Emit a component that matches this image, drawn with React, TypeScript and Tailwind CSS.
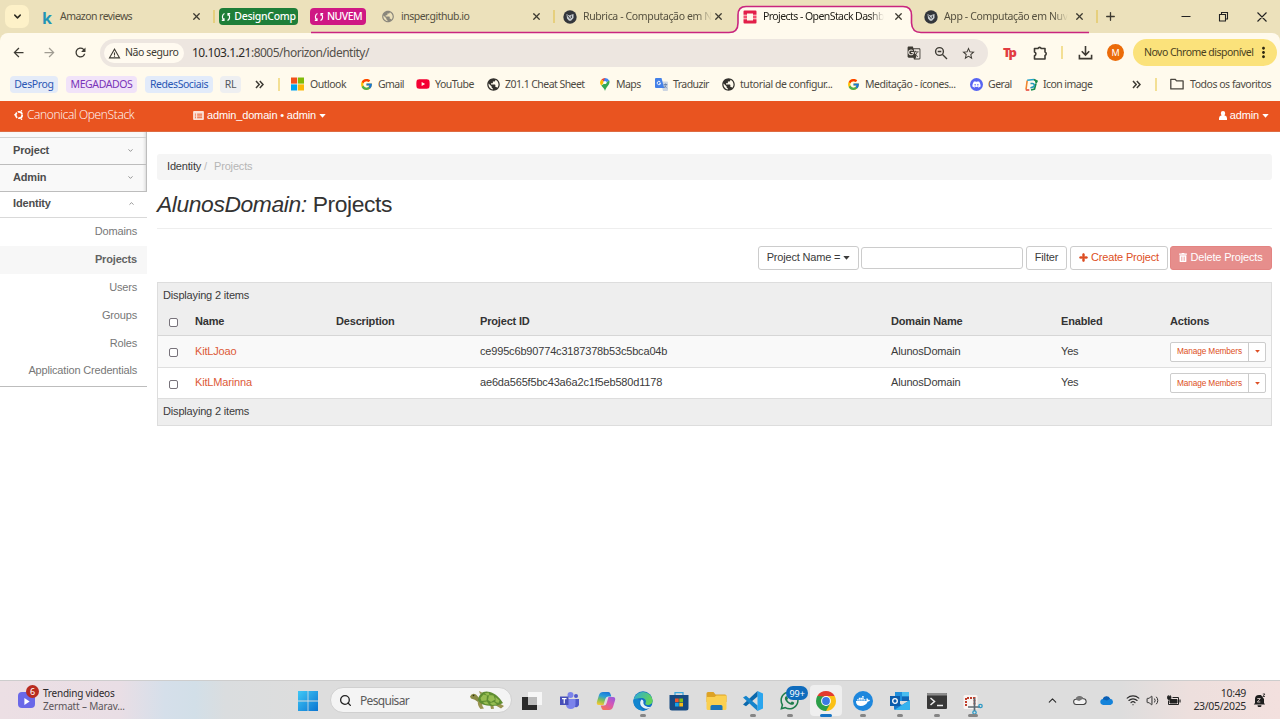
import React from "react";
import type { ReactNode } from "react";
import {
  MdArrowBack,
  MdArrowForward,
  MdRefresh,
  MdWarningAmber,
  MdGTranslate,
  MdStarBorder,
  MdMoreVert,
  MdPublic,
} from "react-icons/md";
import { FaDiscord, FaDocker, FaWhatsapp, FaYoutube, FaPlus, FaTrashAlt } from "react-icons/fa";
import { FcGoogle } from "react-icons/fc";
import { Search, X, ChevronDown, ChevronUp, Plus, Wifi, Volume2 } from "lucide-react";

const ui = "font-['Noto_Sans','Open_Sans',sans-serif]";
const arial = "font-['Liberation_Sans',Arial,sans-serif]";

function Caret({ className = "" }: { className?: string }) {
  return (
    <svg viewBox="0 0 8 5" className={className}>
      <path d="M0 0H8L4 4.6Z" fill="currentColor" />
    </svg>
  );
}

function InsperIcon() {
  return (
    <svg viewBox="0 0 14 14" className="h-[14px] w-[14px]">
      <circle cx="7" cy="7" r="6.7" fill="#33363b" />
      <path d="M3.500 4l2.500 1.500L10.500 4v4L8 10.800H6L4 8.500Z" fill="#c9ced2" />
      <path d="M4.500 5.500l3 3.600M8.300 5.500v2.500" stroke="#33363b" strokeWidth="1" />
    </svg>
  );
}

function OpenStackIcon() {
  return (
    <svg viewBox="0 0 14 14" className="h-[14px] w-[14px]">
      <path d="M1.500 0.500h11a1 1 0 0 1 1 1V4.700H10V3.600H4v1.100H.5V1.500a1 1 0 0 1 1-1Z" fill="#e21f49" />
      <path d="M.5 9.300H4v1.100h6V9.300h3.500v3.200a1 1 0 0 1-1 1h-11a1 1 0 0 1-1-1Z" fill="#e21f49" />
      <path d="M.5 5.500H4v3H.5ZM10 5.500h3.500v3H10Z" fill="#f2506e" />
    </svg>
  );
}

function SyncIcon() {
  return (
    <svg viewBox="0 0 10 10" className="h-[10px] w-[10px]" fill="none" stroke="#fff" strokeWidth="1.200">
      <path d="M3.500 1.500C1.300 2.500.7 5.500 2.400 7.800M.8 8.300H3V6.200M6.500 8.500C8.700 7.500 9.300 4.500 7.600 2.200M9.200 1.700H7v2.100" />
    </svg>
  );
}

type TabProps = { className: string; icon: ReactNode; title: string; text: string };

function Tab({ className, icon, title, text }: TabProps) {
  return (
    <div className={`flex h-full shrink-0 items-center ${className}`}>
      <span className="flex w-[14px] shrink-0 justify-center">{icon}</span>
      <span className={`ml-[6px] pt-px whitespace-nowrap text-[10.500px] ${text}`}>{title}</span>
      <X className="ml-auto h-[11px] w-[11px] shrink-0 text-[#3d3a30]" strokeWidth={2.8} />
    </div>
  );
}

const fade = "[mask-image:linear-gradient(to_right,#000_88%,transparent)]";

function TabStrip() {
  return (
    <div className="relative flex h-[33px] items-center bg-[#ece1bb] text-[#55503f]">
      <svg className="absolute left-0 top-0 h-[34px] w-[1280px]" viewBox="0 0 1280 34" fill="none">
        <path d="M728 34Q738 32 738 24V15Q738 7 746 7H903Q911 7 911 15V24Q912 32 922 34Z" fill="#fffaed" />
        <path
          d="M311 32.500H729Q738 32.500 738 23V15Q738 6.500 746 6.500H903Q911.500 6.500 911.500 15V23Q912 32.500 921 32.500H1089"
          stroke="#c9257f"
          strokeWidth="1.600"
        />
      </svg>
      <div className="relative flex h-full w-full items-center">
        <div className="flex w-[36px] shrink-0 pl-[5px]">
          <span className="flex h-[23px] w-[24px] items-center justify-center rounded-[7px] bg-[#fdf1c8]">
            <ChevronDown className="h-[11px] w-[11px] text-[#2b2920]" strokeWidth={3.2} />
          </span>
        </div>
        <Tab
          className="w-[177px] pl-[4px] pr-[11px]"
          icon={<span className="pt-[2px] text-[16px] font-bold leading-none text-[#1f95b5]">k</span>}
          title="Amazon reviews"
          text="tracking-[-0.55px]"
        />
        <span className="h-[13px] w-[2px] shrink-0 bg-[#e6cf7d]" />
        <span className="ml-[4px] flex h-[17px] w-[79px] shrink-0 items-center justify-center gap-[3px] rounded-[4px] bg-[#1e7e38] text-[10.500px] font-medium tracking-[-0.3px] text-white">
          <SyncIcon />
          DesignComp
        </span>
        <span className="ml-[12px] flex h-[17px] w-[56px] shrink-0 items-center justify-center gap-[3px] rounded-[4px] bg-[#cf1884] text-[10.500px] font-medium tracking-[-0.55px] text-white">
          <SyncIcon />
          NUVEM
        </span>
        <Tab
          className="w-[187px] pl-[15px] pr-[11px]"
          icon={<MdPublic className="h-[15px] w-[15px] text-[#8a877c]" />}
          title="insper.github.io"
          text="tracking-[-0.5px]"
        />
        <span className="h-[13px] w-[2px] shrink-0 bg-[#e6cf7d]" />
        <Tab
          className="w-[183px] pl-[8px] pr-[14px]"
          icon={<InsperIcon />}
          title="Rubrica - Computação em N"
          text={`tracking-[-0.37px] ${fade}`}
        />
        <Tab
          className="w-[174px] pl-[5px] pr-[8px] text-[#23211a]"
          icon={<OpenStackIcon />}
          title="Projects - OpenStack Dashb"
          text={`tracking-[-0.57px] ${fade}`}
        />
        <Tab
          className="w-[184px] pl-[12px] pr-[11px]"
          icon={<InsperIcon />}
          title="App - Computação em Nuv"
          text={`tracking-[-0.37px] ${fade}`}
        />
        <span className="h-[13px] w-[2px] shrink-0 bg-[#e6cf7d]" />
        <Plus className="ml-[6px] h-[13px] w-[13px] text-[#3d3a30]" strokeWidth={2.4} />
        <svg viewBox="0 0 92 14" className="ml-auto mr-[10px] h-[14px] w-[92px]" fill="none" stroke="#222" strokeWidth="1.100">
          <path d="M3.500 6.500H12.500M41.500 4.500h6v6.500h-6ZM43.500 4.500V2.500h6v6.500h-2M79.500 2.500l9 9M88.500 2.500l-9 9" />
        </svg>
      </div>
    </div>
  );
}

function Toolbar() {
  return (
    <div className="flex h-[39px] items-center rounded-t-[8px] bg-[#fffaed] text-[#3d3a33]">
      <div className="flex w-[100px] shrink-0 items-center gap-[16px] pl-[11px]">
        <MdArrowBack className="h-[15px] w-[15px]" />
        <MdArrowForward className="h-[15px] w-[15px] text-[#a09c92]" />
        <MdRefresh className="h-[15px] w-[15px]" />
      </div>
      <div className="mt-px flex h-[28px] w-[888px] shrink-0 items-center rounded-full bg-[#ede6e0] pl-[4px] pr-[12px]">
        <span className="flex h-[20px] w-[80px] shrink-0 items-center gap-[4px] rounded-full bg-[#fffaf0] pl-[4px] text-[10.500px] tracking-[-0.4px] whitespace-nowrap">
          <MdWarningAmber className="h-[13px] w-[13px] shrink-0" />
          Não seguro
        </span>
        <span className="ml-[8px] text-[12px] tracking-[-0.51px] text-[#54504a]">
          <span className="text-[#2c2a26]">10.103.1.21</span>:8005/horizon/identity/
        </span>
        <div className="ml-auto flex items-center gap-[13px]">
          <MdGTranslate className="h-[14px] w-[14px]" />
          <svg viewBox="0 0 14 14" className="h-[14px] w-[14px]" fill="none" stroke="currentColor" strokeWidth="1.400">
            <circle cx="5.500" cy="5.500" r="3.900" />
            <path d="M8.500 8.500l4.500 4.500M3.700 5.500h3.600" />
          </svg>
          <MdStarBorder className="h-[15px] w-[15px]" />
        </div>
      </div>
      <span className="ml-[15px] w-[15px] text-[13px] font-black leading-none tracking-[-1.500px] text-[#e23c41]">Tp</span>
      <svg viewBox="0 0 16 16" className="ml-[14px] h-[16px] w-[16px]" fill="none" stroke="currentColor" strokeWidth="1.600">
        <path d="M2.500 3.500H6a1.700 1.700 0 0 1 3.200 0H13v3.600a1.800 1.800 0 0 1 0 3.400V14H2.500v-3.300a2 2 0 0 0 0-3.800Z" strokeLinejoin="round" />
      </svg>
      <span className="ml-[13px] h-[13px] w-[2px] bg-[#f3df94]" />
      <svg viewBox="0 0 16 16" className="ml-[15px] h-[15px] w-[15px]" fill="none" stroke="currentColor" strokeWidth="1.700">
        <path d="M8 1v9.500M4 6.700l4 4 4-4M1.500 10.500v4h13v-4" />
      </svg>
      <span className="ml-[14px] flex h-[17px] w-[17px] items-center justify-center rounded-full bg-[#eb6b09] text-[9px] text-white">M</span>
      <span className="ml-[9px] flex h-[27px] w-[144px] items-center rounded-full bg-[#fbe27b] pl-[11px] text-[10.500px] tracking-[-0.52px] whitespace-nowrap text-[#4a411d]">
        Novo Chrome disponível
        <MdMoreVert className="ml-[2px] h-[17px] w-[17px] shrink-0 text-[#2b2510]" />
      </span>
    </div>
  );
}

function MapsPin() {
  return (
    <svg viewBox="0 0 10 13" className="h-[13px] w-[10px]">
      <path d="M5 0a4.600 4.600 0 0 0-3.600 1.700L5 4.600Z" fill="#ea4335" />
      <path d="M5 0a4.700 4.700 0 0 1 4.300 2.700L5 4.800 3.500 3.400Z" fill="#4285f4" />
      <path d="M1.400 1.600A4.600 4.600 0 0 0 1.300 7.600L4 4.200Z" fill="#fbbc04" />
      <path d="M9.300 2.600C10.600 6.500 6 8.500 5 13 4.500 10.500 2.500 9 1.300 7.500Z" fill="#34a853" />
      <circle cx="5" cy="4.500" r="1.600" fill="#fff" />
    </svg>
  );
}

function TranslateIcon() {
  return (
    <svg viewBox="0 0 13 13" className="h-[13px] w-[13px]">
      <path d="M5.500 3.500H12a1 1 0 0 1 1 1V12a1 1 0 0 1-1 1H8Z" fill="#ccd5e2" />
      <path d="M1 0h5.500L9.200 10H1a1 1 0 0 1-1-1V1a1 1 0 0 1 1-1Z" fill="#4480e8" />
      <path d="M5.300 4A1.700 1.700 0 1 0 5.600 5.200H4" fill="none" stroke="#fff" strokeWidth=".9" />
      <path d="M8.700 6.500h3.500M10.500 5.500v1M11.500 6.500L9.300 10M9.300 7.500l2.500 2.700" stroke="#5c7aa8" strokeWidth=".8" fill="none" />
    </svg>
  );
}

function MicrosoftIcon() {
  return (
    <svg viewBox="0 0 14 14" className="h-[14px] w-[14px]">
      <path d="M0 0h6.600v6.600H0Z" fill="#f1511b" />
      <path d="M7.400 0H14v6.600H7.400Z" fill="#80bb0a" />
      <path d="M0 7.400h6.600V14H0Z" fill="#00a3ee" />
      <path d="M7.400 7.400H14V14H7.400Z" fill="#fbb90a" />
    </svg>
  );
}

function IconImageIcon() {
  return (
    <svg viewBox="0 0 13 13" className="h-[13px] w-[13px]" fill="none" strokeWidth="1.600">
      <path d="M1 11.500L2.200 2.500" stroke="#f0862e" />
      <path d="M.8 12h3.500" stroke="#e84a3c" />
      <path d="M2.200 2.200L9 1.500" stroke="#25a2c8" />
      <path d="M9 1.500l3 1.700-1 2" fill="#168a4a" stroke="#168a4a" />
      <path d="M11 5.500L9.500 11 6 12" stroke="#168a4a" />
      <path d="M5.500 5.500h2a1.800 1.800 0 0 1 0 3.600L5.500 10" stroke="#239bb5" />
    </svg>
  );
}

function MoreChevrons() {
  return (
    <svg viewBox="0 0 9 9" className="h-[9px] w-[9px]" fill="none" stroke="#3d3a33" strokeWidth="1.500">
      <path d="M1 1l3.200 3.500L1 8M4.800 1L8 4.500 4.800 8" />
    </svg>
  );
}

function Bookmark({ className, icon, label, text }: { className: string; icon: ReactNode; label: string; text: string }) {
  return (
    <span className={`flex shrink-0 items-center gap-[5px] ${className}`}>
      <span className="flex w-[13px] shrink-0 justify-center">{icon}</span>
      <span className={`whitespace-nowrap pt-px ${text}`}>{label}</span>
    </span>
  );
}

function Bookmarks() {
  const globe = <MdPublic className="h-[15px] w-[15px] shrink-0 text-[#33312d]" />;
  const g = <FcGoogle className="h-[13px] w-[13px] shrink-0" />;
  const chip = "flex h-[17px] shrink-0 items-center justify-center rounded-[4px] pt-px whitespace-nowrap";
  return (
    <div className="flex h-[29px] items-center bg-[#fffaed] pb-[5px] text-[10.500px] text-[#4e4a43]">
      <span className={`${chip} ml-[10px] w-[48px] bg-[#e4ebf8] tracking-[-0.35px] text-[#2b57b4]`}>DesProg</span>
      <span className={`${chip} ml-[8px] w-[71px] bg-[#f1e3f9] tracking-[-0.4px] text-[#7b34b8]`}>MEGADADOS</span>
      <span className={`${chip} ml-[8px] w-[68px] bg-[#e2ebfa] tracking-[-0.45px] text-[#2b57b4]`}>RedesSociais</span>
      <span className={`${chip} ml-[7px] w-[21px] bg-[#eeeff1] tracking-[-0.3px] text-[#54585e]`}>RL</span>
      <span className="ml-[14px] w-[23px]">
        <MoreChevrons />
      </span>
      <span className="h-[13px] w-[2px] bg-[#f3df94]" />
      <Bookmark className="ml-[11px] w-[69px]" icon={<MicrosoftIcon />} label="Outlook" text="pl-px tracking-[-0.5px]" />
      <Bookmark className="w-[56px]" icon={g} label="Gmail" text="tracking-[-0.55px]" />
      <Bookmark className="w-[71px]" icon={<FaYoutube className="h-[14px] w-[14px] shrink-0 text-[#f40032]" />} label="YouTube" text="pl-px tracking-[-0.5px]" />
      <Bookmark className="w-[111px]" icon={globe} label="Z01.1 Cheat Sheet" text="tracking-[-0.55px]" />
      <Bookmark className="w-[57px]" icon={<MapsPin />} label="Maps" text="tracking-[-0.55px]" />
      <Bookmark className="w-[67px]" icon={<TranslateIcon />} label="Traduzir" text="tracking-[-0.55px]" />
      <Bookmark className="w-[125px]" icon={globe} label="tutorial de configur..." text="tracking-[-0.42px]" />
      <Bookmark className="w-[123px]" icon={g} label="Meditação - ícones..." text="tracking-[-0.47px]" />
      <Bookmark
        className="w-[55px]"
        icon={
          <span className="flex h-[13px] w-[13px] shrink-0 items-center justify-center rounded-full bg-[#5865f2]">
            <FaDiscord className="h-[9px] w-[9px] text-white" />
          </span>
        }
        label="Geral"
        text="tracking-[-0.5px]"
      />
      <Bookmark className="w-[106px]" icon={<IconImageIcon />} label="Icon image" text="tracking-[-0.57px]" />
      <span className="ml-px w-[23px]">
        <MoreChevrons />
      </span>
      <span className="h-[13px] w-[2px] bg-[#f3df94]" />
      <svg viewBox="0 0 14 12" className="ml-[13px] h-[12px] w-[14px]" fill="none" stroke="#4a463e" strokeWidth="1.300">
        <path d="M.8 1.300h4.300l1.500 1.600h6.500v8H.8Z" strokeLinejoin="round" />
      </svg>
      <span className="ml-[6px] pt-px whitespace-nowrap tracking-[-0.47px]">Todos os favoritos</span>
    </div>
  );
}

function HorizonHeader() {
  return (
    <div className={`flex h-[31px] items-center border-b border-[#dd6c43] bg-[#e95420] pb-px text-white ${arial}`}>
      <div className="flex w-[193px] shrink-0 items-center gap-[3px] pb-px pl-[14px] font-['Open_Sans','Noto_Sans',sans-serif] text-[12px] font-light tracking-[-0.36px]">
        <svg viewBox="0 0 10 10" className="h-[10px] w-[10px]" fill="none" stroke="#fff">
          <circle cx="5" cy="5" r="3.200" strokeWidth="1.700" strokeDasharray="5.700 1" />
          <path d="M.3 4.800h1.500M7.200 1.200l.7-.9M7.200 8.800l.7.900" strokeWidth="1.500" />
        </svg>
        Canonical OpenStack
      </div>
      <div className="flex items-center text-[11px] tracking-[-0.15px]">
        <svg viewBox="0 0 12 10" className="mr-[3px] h-[9px] w-[11px]">
          <path d="M1 0h10a1 1 0 0 1 1 1v8a1 1 0 0 1-1 1H1a1 1 0 0 1-1-1V1a1 1 0 0 1 1-1Z" fill="#fbe1d7" />
          <path d="M2 3.500h1.200M4.500 3.500H10M2 5.500h1.200M4.500 5.500H10M2 7.500h1.200M4.500 7.500H10" stroke="#e95420" />
        </svg>
        admin_domain&nbsp;•&nbsp;admin
        <Caret className="ml-[3px] h-[4px] w-[7px]" />
      </div>
      <div className="ml-auto mr-[11px] flex items-center text-[11px] tracking-[-0.15px]">
        <svg viewBox="0 0 8 9" className="mr-[3px] h-[9px] w-[8px]" fill="#fff">
          <path d="M0 9V7.300Q0 5 2 4.600H6Q8 5 8 7.300V9ZM1.800 2.300a2.200 2.300 0 0 1 4.400 0 2.200 2.500 0 0 1-4.400 0Z" />
        </svg>
        admin
        <Caret className="ml-[3px] h-[4px] w-[7px]" />
      </div>
    </div>
  );
}

const links = ["Domains", "Projects", "Users", "Groups", "Roles", "Application Credentials"];

function Sidebar() {
  const head = "flex items-center justify-between pb-[2px] pl-[13px] pr-[12px] font-bold text-[#4d4d4d]";
  return (
    <nav className="flex w-[147px] shrink-0 flex-col text-[11px] tracking-[-0.17px]">
      <div className="border-r border-[#bdbdbd] bg-[#f9f9f9] shadow-[inset_-3px_0_3px_-2px_#d5d5d5]">
        <div className="h-[6px] border-b border-[#d2d2d2]" />
        <div className={`${head} h-[27px] border-b border-[#bdbdbd]`}>
          Project
          <ChevronDown className="h-[7px] w-[7px]" />
        </div>
        <div className={`${head} h-[27px] border-b border-[#bdbdbd]`}>
          Admin
          <ChevronDown className="h-[7px] w-[7px]" />
        </div>
      </div>
      <div className={`${head} h-[26px] border-b border-[#d9d9d9]`}>
        Identity
        <ChevronUp className="h-[7px] w-[7px]" />
      </div>
      <ul className="border-b border-[#bdbdbd] pb-px text-right text-[#777]">
        {links.map((l) => (
          <li
            key={l}
            className={`h-[27.900px] pr-[10px] leading-[27px] ${l === "Projects" ? "bg-[#f7f7f7] font-bold text-[#636363]" : ""}`}
          >
            {l}
          </li>
        ))}
      </ul>
    </nav>
  );
}

const rows = [
  { name: "KitLJoao", id: "ce995c6b90774c3187378b53c5bca04b", row: "h-[32px] bg-[#f9f9f9] border-b border-[#dfdfdf]" },
  { name: "KitLMarinna", id: "ae6da565f5bc43a6a2c1f5eb580d1178", row: "h-[30px] bg-white" },
];
const cols = "grid grid-cols-[37px_141px_144px_411px_170px_109px_1fr] items-center";

function Checkbox() {
  return <span className="mt-[2px] ml-[11px] block h-[9px] w-[9px] rounded-[2px] border border-[#77727a] bg-white" />;
}

function Main() {
  const btn = "flex h-[24px] shrink-0 items-center justify-center rounded-[3px] border border-[#ccc] pb-px";
  return (
    <main className="ml-[10px] flex w-[1115px] flex-col pt-[22px] text-[11px] tracking-[-0.17px] text-[#3b3b3b]">
      <div className="flex h-[26px] items-center rounded-[3px] bg-[#f5f5f5] pb-px pl-[10px]">
        Identity<span className="ml-[3px] text-[#bbb]">/</span>
        <span className="ml-[7px] text-[#b5b5b5]">Projects</span>
      </div>
      <h1 className="flex h-[49px] items-center whitespace-pre border-b border-[#eee] text-[22.860px] leading-none tracking-[-0.41px] text-[#333]">
        <em>AlunosDomain:</em> Projects
      </h1>
      <div className="mt-[17px] flex h-[24px] items-center justify-end">
        <span className={`${btn} w-[101px]`}>
          Project Name =<Caret className="ml-[3px] h-[4px] w-[7px]" />
        </span>
        <span className="ml-[2px] h-[22px] w-[162px] rounded-[3px] border border-[#ccc] bg-white" />
        <span className={`${btn} ml-[3px] w-[41px]`}>Filter</span>
        <span className={`${btn} ml-[3px] w-[98px] text-[#dd4f24]`}>
          <FaPlus className="mr-[3px] h-[9px] w-[9px] stroke-[40px] stroke-current" />
          Create Project
        </span>
        <span className="ml-[2px] flex h-[24px] w-[102px] items-center justify-center rounded-[3px] border border-[#e38482] bg-[#e68e8c] pb-px text-white">
          <FaTrashAlt className="mr-[3px] h-[9px] w-[8px]" />
          Delete Projects
        </span>
      </div>
      <div className="mt-[12px] border border-[#ddd]">
        <div className="flex h-[25px] items-center bg-[#eee] pb-px pl-[5px]">Displaying 2 items</div>
        <div className={`${cols} h-[28px] border-b border-[#d6d6d6] bg-[#eee] font-bold text-[#333]`}>
          <Checkbox />
          <span className="pb-px">Name</span>
          <span className="pb-px">Description</span>
          <span className="pb-px">Project ID</span>
          <span className="pb-px">Domain Name</span>
          <span className="pb-px">Enabled</span>
          <span className="pb-px">Actions</span>
        </div>
        {rows.map((r) => (
          <div key={r.name} className={`${cols} ${r.row}`}>
            <Checkbox />
            <span className="pb-px text-[#dd5a38]">{r.name}</span>
            <span />
            <span className="pb-px">{r.id}</span>
            <span className="pb-px">AlunosDomain</span>
            <span className="pb-px">Yes</span>
            <span className="flex h-[20px] w-[96px] rounded-[2px] border border-[#ccc] bg-white text-[8.300px] tracking-[-0.14px] text-[#dd4f24]">
              <span className="flex w-[78px] shrink-0 items-center justify-center border-r border-[#ccc]">Manage Members</span>
              <span className="flex flex-1 items-center justify-center">
                <Caret className="h-[3px] w-[5px]" />
              </span>
            </span>
          </div>
        ))}
        <div className="flex h-[27px] items-center border-t border-[#ddd] bg-[#eee] pb-[2px] pl-[5px]">Displaying 2 items</div>
      </div>
    </main>
  );
}

function StartIcon() {
  return (
    <svg viewBox="0 0 20 20" className="mt-px h-[20px] w-[20px]">
      <defs>
        <linearGradient id="win" x1="0" y1="0" x2="1" y2="1">
          <stop offset="0" stopColor="#3fc8f6" />
          <stop offset="1" stopColor="#0b74d1" />
        </linearGradient>
      </defs>
      <path d="M0 0h9.600v9.600H0ZM10.400 0H20v9.600h-9.600ZM0 10.400h9.600V20H0ZM10.400 10.400H20V20h-9.600Z" fill="url(#win)" />
    </svg>
  );
}

function Turtle() {
  return (
    <svg viewBox="0 0 36 20" className="h-[20px] w-[36px]">
      <path d="M1 6.500Q3 2.500 7 4.500L11 9 9 12Q6 9 2 8.500Z" fill="#8a8b45" />
      <path d="M9 11q-1 4 2.500 8l3.500-.5Q12 15 14 12ZM21 14l1 5 3-.3-1-5ZM28 12l7 4-3 2.500-6-3.500ZM11 4L10 1l4 2Z" fill="#9a9350" />
      <path d="M9 10C10 3 15 0 21 2c6 2 9 5 13 11-5 3-10 3.500-16 2.500C13 14.500 10 13 9 10Z" fill="#5f8d31" />
      <path d="M11.500 8l3-3.500 3.500 1-.5 5-5 .5ZM15.500 3.500l4-1 1 2.500-2 .5ZM20 5l4.500.5 1.500 4-4 2.500-3-2ZM26.500 7l4 3.500-1 2.500-3-1ZM14 12l4-.5 2 3-4-.5ZM21 13l4-1 3 2.500-5 .500Z" fill="#97bd52" />
      <circle cx="4.500" cy="5.500" r=".8" fill="#2b2d14" />
    </svg>
  );
}

const taskView = (
  <svg viewBox="0 0 20 20" className="h-[20px] w-[20px]">
    <path d="M6 1h14v13H6Z" fill="#f6f6f6" />
    <path d="M0 6h15v13H0Z" fill="#2a2a2a" />
    <path d="M6 6h9v8H6Z" fill="#bcbcbc" />
  </svg>
);
const teams = (
  <svg viewBox="0 0 20 20" className="h-[20px] w-[20px]">
    <circle cx="17" cy="5" r="2" fill="#5059c9" />
    <circle cx="11.500" cy="4" r="3" fill="#7b83eb" />
    <path d="M14 8h6v5.500a3 3 0 0 1-5 2Z" fill="#5059c9" />
    <path d="M7 8h9.500v6a4.800 4.800 0 0 1-9.500 0Z" fill="#7b83eb" />
    <path d="M1 5.500h8.500v8.500H1Z" fill="#464eb8" />
    <path d="M3 7.700h4.500M5.250 7.700v4.800" stroke="#fff" strokeWidth="1.200" />
  </svg>
);
const copilot = (
  <svg viewBox="0 0 20 20" className="h-[20px] w-[20px]">
    <defs>
      <linearGradient id="cpA" x1=".6" y1="0" x2=".3" y2="1">
        <stop offset="0" stopColor="#1a78d8" />
        <stop offset=".35" stopColor="#2a9fd8" />
        <stop offset=".65" stopColor="#7fbf5a" />
        <stop offset="1" stopColor="#f5c931" />
      </linearGradient>
      <linearGradient id="cpB" x1="1" y1="0" x2=".3" y2="1">
        <stop offset="0" stopColor="#8f5be0" />
        <stop offset=".5" stopColor="#d457b8" />
        <stop offset="1" stopColor="#f4705a" />
      </linearGradient>
    </defs>
    <path d="M7 1h5.500q1.500 0 2 2l.8 2.500H12Q10 5.500 9.300 8L7.500 14H3Q0 14 1 10.500L3 4Q4 1 7 1Z" fill="url(#cpA)" />
    <path d="M13 19H7.500q-1.500 0-2-2l-.8-2.500H8q2 0 2.700-2.500l1.800-6H17q3 0 2 3.500L17 16Q16 19 13 19Z" fill="url(#cpB)" />
  </svg>
);
const edge = (
  <svg viewBox="0 0 20 20" className="h-[20px] w-[20px]">
    <defs>
      <linearGradient id="edA" x1="0" y1="0" x2="1" y2=".4">
        <stop offset="0" stopColor="#2ba7de" />
        <stop offset="1" stopColor="#62d45a" />
      </linearGradient>
    </defs>
    <circle cx="10" cy="10" r="9.700" fill="#1270c4" />
    <path d="M.5 9A9.700 9.700 0 0 1 19.700 9.500c0 3-2.500 4.500-5 4.500-2 0-3-1-2-2.500 1-2-1-4.500-4-4.500C5 7 1.500 8 .5 9Z" fill="url(#edA)" />
    <path d="M8.500 8.500C6 11 7 16 12 17.500c3 .6 5-.5 6-1.700C14 17 9.500 14 10.500 10.800 10.500 9.500 9.500 8.500 8.500 8.500Z" fill="#e3f1fa" />
    <path d="M7.300 9.500C5 13 7.500 18.500 12 19.500A9.700 9.700 0 0 1 .4 9Q3 6.500 7.300 9.500Z" fill="#1286cf" />
  </svg>
);
const store = (
  <svg viewBox="0 0 20 20" className="h-[20px] w-[20px]">
    <path d="M6 5V1.700h8V5" fill="none" stroke="#38a8e0" strokeWidth="1.200" />
    <path d="M.5 4h19v13a2.500 2.500 0 0 1-2.500 2.500H3A2.500 2.500 0 0 1 .5 17Z" fill="#174a82" />
    <path d="M6 7.500h3.700v3.700H6Z" fill="#f0552b" />
    <path d="M10.300 7.500H14v3.700h-3.700Z" fill="#82bc1b" />
    <path d="M6 11.800h3.700v3.700H6Z" fill="#15a4ea" />
    <path d="M10.300 11.800H14v3.700h-3.700Z" fill="#fabb18" />
  </svg>
);
const folder = (
  <svg viewBox="0 0 20 20" className="h-[20px] w-[21px]">
    <path d="M0 2.500A1.500 1.500 0 0 1 1.500 1H7l2 2.500H18.500A1.500 1.500 0 0 1 20 5v6H0Z" fill="#dda225" />
    <path d="M0 6h8l2-1.500h10V17.500A1.500 1.500 0 0 1 18.500 19h-17A1.500 1.500 0 0 1 0 17.500Z" fill="#fbd050" />
    <path d="M4 19v-3.500a1.500 1.500 0 0 1 1.500-1.500h9a1.500 1.500 0 0 1 1.500 1.500V19Z" fill="#1b74b8" />
  </svg>
);
const vscode = (
  <svg viewBox="0 0 20 20" className="h-[20px] w-[20px]">
    <path d="M14.500 0L20 2.500v15L14.500 20Z" fill="#2aa5ee" />
    <path d="M14.500 0v5.500L3 15.200 0 13.500Z" fill="#0b69ad" />
    <path d="M14.500 20v-5.500L3 4.800 0 6.500Z" fill="#1584cc" />
  </svg>
);
const chrome = (
  <svg viewBox="0 0 20 20" className="h-[20px] w-[20px]">
    <path d="M10 10L1.340 5A10 10 0 0 1 18.660 5Z" fill="#e33b2e" />
    <path d="M10 10L18.660 5A10 10 0 0 1 10 20Z" fill="#fbc116" />
    <path d="M10 10L10 20A10 10 0 0 1 1.340 5Z" fill="#2c9f49" />
    <path d="M10 5h8.660L14 12.500Z" fill="#fbc116" />
    <path d="M14.300 12.500L10 20 8 14Z" fill="#2c9f49" />
    <path d="M5.700 12.500L1.340 5 8 5.500Z" fill="#2c9f49" />
    <circle cx="10" cy="10" r="4.900" fill="#fff" />
    <circle cx="10" cy="10" r="3.900" fill="#3a7ae4" />
  </svg>
);
const docker = (
  <span className="flex h-[20px] w-[20px] items-center justify-center rounded-full bg-[#1e87dd]">
    <FaDocker className="h-[14px] w-[14px] text-white" />
  </span>
);
const outlook = (
  <svg viewBox="0 0 20 20" className="h-[20px] w-[20px]">
    <path d="M5 1h14v9H5Z" fill="#1f8fdc" />
    <path d="M12 1h7v4.500h-7Z" fill="#49bdf0" />
    <path d="M12 5.500h7V10h-7Z" fill="#1166b5" />
    <path d="M4 9l8 5 8-5v8.500a1.500 1.500 0 0 1-1.500 1.500h-13A1.500 1.500 0 0 1 4 17.500Z" fill="#1678c8" />
    <path d="M20 9L5 18.500q.5.500 1 .5h12.500A1.500 1.500 0 0 0 20 17.500Z" fill="#35b3ee" />
    <path d="M0 5h10v10H0Z" fill="#0b5cab" />
    <circle cx="5" cy="10" r="2.300" fill="none" stroke="#fff" strokeWidth="1.300" />
  </svg>
);
const terminal = (
  <svg viewBox="0 0 20 20" className="h-[20px] w-[20px]">
    <path d="M1 2h18a1 1 0 0 1 1 1v14a1 1 0 0 1-1 1H1a1 1 0 0 1-1-1V3a1 1 0 0 1 1-1Z" fill="#383838" />
    <path d="M0 3a1 1 0 0 1 1-1h18a1 1 0 0 1 1 1v1.500H0Z" fill="#8d8d8d" />
    <path d="M3.500 7l4 3.500-4 3.500M10 14.500h6" stroke="#eee" strokeWidth="1.500" fill="none" />
  </svg>
);
const snip = (
  <svg viewBox="0 0 20 20" className="mt-[8px] h-[20px] w-[20px]">
    <path d="M2 0h11a1.500 1.500 0 0 1 1.500 1.500V14H2A1.500 1.500 0 0 1 .5 12.500v-11A1.500 1.500 0 0 1 2 0Z" fill="#f8f4f2" />
    <path d="M3 11V3h8.500v7" stroke="#bf3e2b" strokeWidth="2" strokeDasharray="2 1" fill="none" />
    <path d="M11.500 3v13M5 12h12" stroke="#5f6972" strokeWidth="1.700" />
    <circle cx="17.500" cy="11" r="1.700" fill="none" stroke="#2f9ac6" strokeWidth="1.300" />
    <circle cx="11.500" cy="17.500" r="1.700" fill="none" stroke="#2f9ac6" strokeWidth="1.300" />
  </svg>
);
const whatsapp = (
  <span className="relative flex">
    <FaWhatsapp className="h-[21px] w-[21px] text-[#1e7d4c]" />
    <span className="absolute left-[7px] top-[-4px] flex h-[14px] w-[22px] items-center justify-center rounded-full bg-[#0f6cbd] text-[9px] leading-none text-white">
      99+
    </span>
  </span>
);

const apps: { icon: ReactNode; mark: string }[] = [
  { icon: taskView, mark: "" },
  { icon: teams, mark: "" },
  { icon: copilot, mark: "" },
  { icon: edge, mark: "w-[6px] bg-[#858585]" },
  { icon: store, mark: "" },
  { icon: folder, mark: "" },
  { icon: vscode, mark: "w-[6px] bg-[#858585]" },
  { icon: whatsapp, mark: "w-[6px] bg-[#858585]" },
  { icon: chrome, mark: "w-[12px] bg-[#1674c4]" },
  { icon: docker, mark: "w-[6px] bg-[#858585]" },
  { icon: outlook, mark: "w-[6px] bg-[#858585]" },
  { icon: terminal, mark: "w-[6px] bg-[#858585]" },
  { icon: snip, mark: "w-[10px] bg-[#858585]" },
];

function Taskbar() {
  return (
    <footer className="flex h-[39px] items-center border-t border-[#cdcdcd] bg-[linear-gradient(to_right,#ecdfe4_0px,#e9dee5_120px,#d5dfea_165px,#d2dfe8_195px,#dadddf_225px,#dddddd_300px,#dddddd_1120px,#eddfdd_1190px,#f3e0de_1280px)]">
      <div className="flex w-[298px] shrink-0 items-center pl-[18px]">
        <span className="relative flex h-[16px] w-[17px] items-center justify-center rounded-[4px] bg-[#6a68e8]">
          <svg viewBox="0 0 6 8" className="mt-[2px] h-[7px] w-[6px]">
            <path d="M0 0l6 4-6 4Z" fill="#fff" />
          </svg>
          <span className="absolute left-[8px] top-[-7px] flex h-[13px] w-[13px] items-center justify-center rounded-full bg-[#b92b20] text-[9px] leading-none text-white">
            6
          </span>
        </span>
        <div className="ml-[8px] text-[10px] leading-[13.500px] tracking-[-0.22px] text-[#2d2a2c]">
          <div>Trending videos</div>
          <div className="tracking-[-0.17px] text-[#5b565a]">Zermatt – Marav...</div>
        </div>
      </div>
      <StartIcon />
      <div className="ml-[12px] flex h-[26px] w-[182px] shrink-0 items-center rounded-full border border-[#d0d0d0] bg-[#f4f4f4] pl-[8px] pr-[6px]">
        <Search className="h-[13px] w-[13px] text-[#222]" strokeWidth={2.4} />
        <span className="ml-[8px] pt-px text-[12px] tracking-[-0.68px] text-[#5b5b5b]">Pesquisar</span>
        <span className="ml-auto">
          <Turtle />
        </span>
      </div>
      <div className="ml-[2px] flex h-full">
        {apps.map((a, i) => (
          <div key={i} className="flex h-full w-[36.750px] flex-col items-center pt-[4px]">
            <div
              className={`flex h-[31px] w-[32px] items-center justify-center rounded-[4px] ${a.icon === chrome ? "bg-[#efefef]" : ""}`}
            >
              {a.icon}
            </div>
            <div className={`-mt-[2px] h-[3px] rounded-full ${a.mark}`} />
          </div>
        ))}
      </div>
      <div className="ml-auto mr-[14px] flex shrink-0 items-center text-[#2b2b2b]">
        <ChevronUp className="h-[13px] w-[13px]" strokeWidth={2} />
        <svg viewBox="0 0 16 12" className="ml-[14px] h-[11px] w-[14px]">
          <path d="M4 10.500a3 3 0 0 1-.5-6 4.500 4.500 0 0 1 8-.5 3.200 3.200 0 0 1 .5 6.500Z" fill="#f3f3f3" stroke="#444" strokeWidth="1.200" />
          <path d="M3 5a4.400 4.400 0 0 1 8.500-1L7 6.500Z" fill="#777" />
        </svg>
        <svg viewBox="0 0 16 12" className="ml-[13px] h-[11px] w-[14px]">
          <path d="M4 11a3.400 3.400 0 0 1-.5-6.800 4.500 4.500 0 0 1 8-.3A3.600 3.600 0 0 1 12 11Z" fill="#1483da" />
          <path d="M3 4.500a4.500 4.500 0 0 1 8.500-.5L8 6Z" fill="#0a5fb5" />
        </svg>
        <Wifi className="ml-[12px] h-[14px] w-[14px]" strokeWidth={1.900} />
        <Volume2 className="ml-[6px] h-[13px] w-[13px]" strokeWidth={1.800} />
        <svg viewBox="0 0 14 11" className="ml-[8px] h-[11px] w-[14px]" fill="none" stroke="#222">
          <path d="M5.500 2.500h6v7h-10v-4" />
          <path d="M3 4.500h7v3.500H3Z" fill="#222" />
          <path d="M13 4.500v3" strokeWidth="1.200" />
          <path d="M.5 1.500h3.500v1.500a1.700 1.700 0 0 1-3.500 0ZM1.300 0v1.500M3.200 0v1.500" fill="#222" strokeWidth=".8" />
        </svg>
        <div className="ml-[7px] w-[58px] text-right text-[10.500px] leading-[13.500px] tracking-[-0.33px]">
          <div>10:49</div>
          <div>23/05/2025</div>
        </div>
        <svg viewBox="0 0 13 14" className="ml-[7px] h-[14px] w-[13px]">
          <path d="M2 10V6a4 4 0 0 1 4-4h2l3 4v4l1 1.500H.8ZM4.500 12.200h4a2 2 0 0 1-4 0Z" fill="#1e1e1e" />
          <path d="M4.300 5.500h3l-3 3.500h3" stroke="#d8c9c7" strokeWidth=".9" fill="none" />
          <path d="M9.800 1h2.200L9.800 3.500H12" stroke="#1e1e1e" strokeWidth=".8" fill="none" />
        </svg>
      </div>
    </footer>
  );
}

export default function App() {
  return (
    <div className={`flex h-[719px] w-[1280px] flex-col overflow-hidden bg-white ${ui}`}>
      <div className="bg-[#ece1bb]">
        <TabStrip />
        <Toolbar />
        <Bookmarks />
      </div>
      <HorizonHeader />
      <div className={`flex h-[548px] ${arial}`}>
        <Sidebar />
        <Main />
      </div>
      <Taskbar />
    </div>
  );
}
